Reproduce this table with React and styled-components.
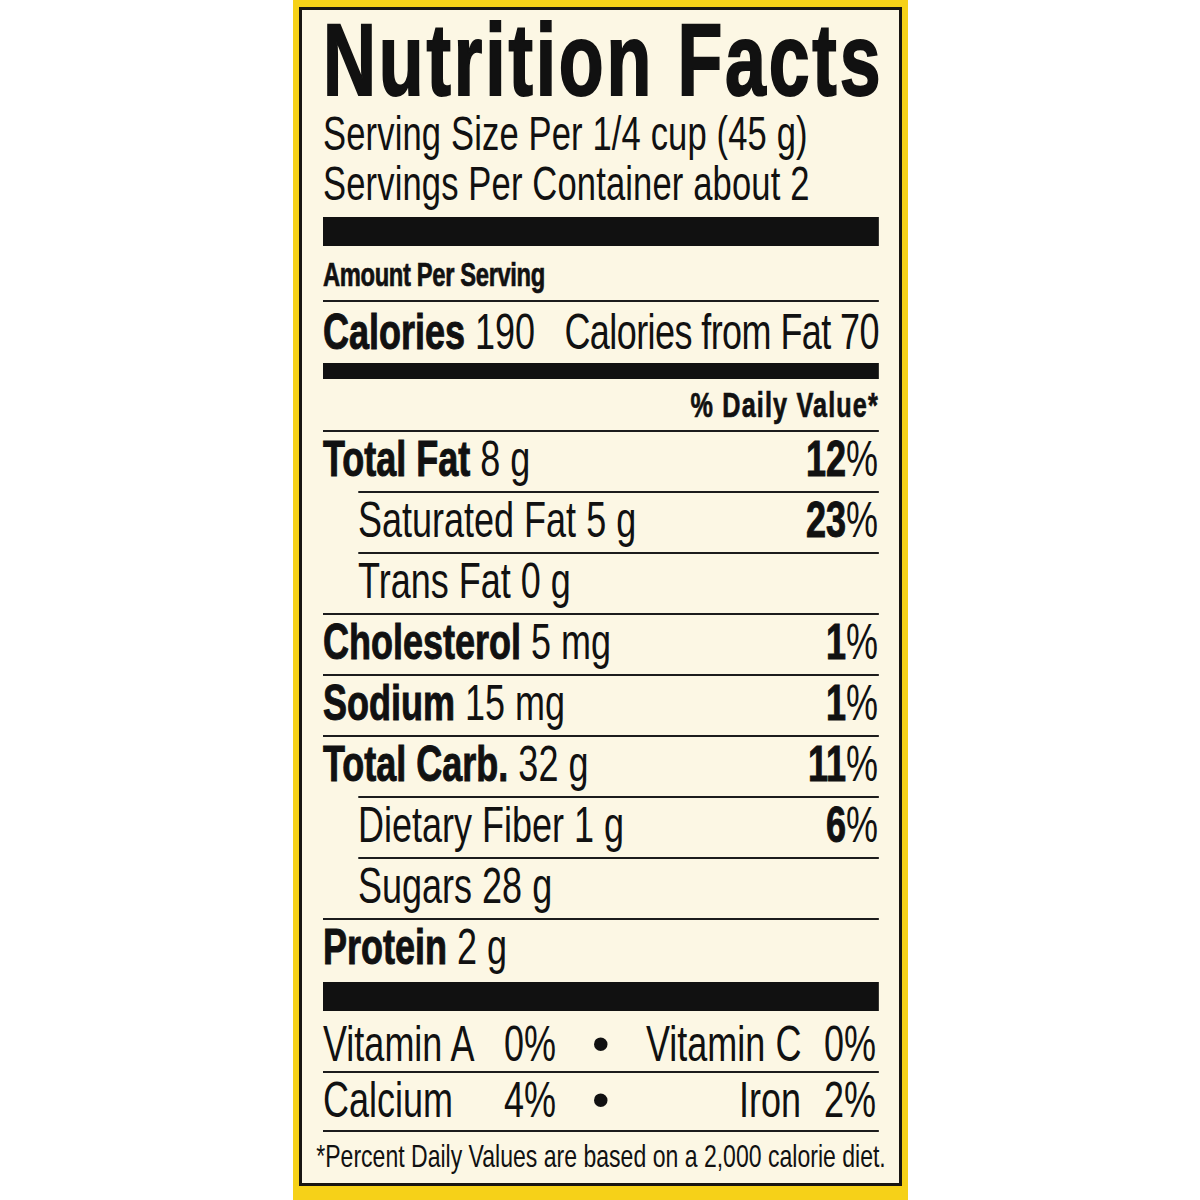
import React from 'react'
import styled, { createGlobalStyle } from 'styled-components'

// The label face is a condensed grotesque; Liberation Sans is squeezed
// horizontally by K to get the same proportions.
const K = 0.72
const u = (px) => `${(px / K).toFixed(2)}px`

const GlobalStyle = createGlobalStyle`
  html, body {
    margin: 0;
    padding: 0;
    background: #fff;
  }
  body {
    font-family: "Liberation Sans", Arial, Helvetica, sans-serif;
    color: #111;
  }
`

const Page = styled.div`
  width: 1200px;
  height: 1200px;
  display: flex;
  justify-content: center;
`

const Frame = styled.div`
  width: 615px;
  box-sizing: border-box;
  background: #f6d118;
  padding: 7px 6px 14px 6px;
`

const Label = styled.section`
  background: #fcf7e4;
  border: 3px solid #181512;
  padding: 8px 19px 0 21px;
  overflow: hidden;
`

const Sheet = styled.div`
  width: ${u(556)};
  transform: scaleX(${K});
  transform-origin: 0 0;
  display: flex;
  flex-direction: column;
  white-space: nowrap;
`

const Title = styled.h1`
  margin: 0;
  font-size: 102px;
  line-height: 84px;
  font-weight: 700;
  letter-spacing: 3.9px;
  -webkit-text-stroke: 2px currentColor;
`

const Serving = styled.p`
  margin: 0;
  font-size: 48px;
  line-height: 50px;
  letter-spacing: 0.2px;
  &:first-of-type {
    margin-top: 7px;
  }
`

const Bar = styled.div`
  height: ${({ $h }) => $h}px;
  margin-top: ${({ $gap }) => $gap || 0}px;
  background: #111;
`

const Heading = styled.div`
  font-weight: 700;
  font-size: ${({ $right }) => ($right ? 35 : 33)}px;
  line-height: 51px;
  padding-top: ${({ $right }) => ($right ? 0 : 3)}px;
  letter-spacing: ${({ $right }) => ($right ? '1.6px' : '-0.5px')};
  text-align: ${({ $right }) => ($right ? 'right' : 'left')};
  -webkit-text-stroke: 0.7px currentColor;
`

const Row = styled.div`
  display: flex;
  justify-content: space-between;
  align-items: baseline;
  border-top: 2px solid #1c1c1c;
  margin-left: ${({ $indent }) => ($indent ? u(35) : 0)};
  height: ${({ $h }) => $h || 59}px;
  font-size: 50px;
  line-height: ${({ $lh }) => $lh || 55}px;
  b {
    font-weight: 700;
    -webkit-text-stroke: 1px currentColor;
  }
`

const Tight = styled.span`
  letter-spacing: -0.8px;
`

const Pct = styled.span`
  padding-right: ${u(1)};
`

const VitRow = styled.div`
  display: grid;
  grid-template-columns: ${u(169)} ${u(64)} ${u(90)} ${u(155)} ${u(78)};
  align-items: baseline;
  border-top: ${({ $top }) => ($top ? '2px solid #1c1c1c' : 'none')};
  border-bottom: ${({ $top }) => ($top ? '2px solid #1c1c1c' : 'none')};
  padding-top: ${({ $top }) => ($top ? 0 : 6)}px;
  padding-bottom: ${({ $top }) => ($top ? 2 : 0)}px;
  font-size: 50px;
  line-height: ${({ $top }) => ($top ? 55 : 54)}px;
`

const Cell = styled.span`
  text-align: ${({ $align }) => $align || 'left'};
  padding-right: ${({ $end }) => ($end ? u(3) : 0)};
`

const Dot = styled.span`
  text-align: center;
  span {
    display: inline-block;
    transform: scaleX(${1 / K});
  }
`

const Footnote = styled.p`
  margin: 0 ${u(-8)};
  font-size: 32px;
  line-height: 48px;
  padding-bottom: 3px;
  text-align: center;
`

const nutrients = [
  { name: 'Total Fat', amount: '8 g', pct: '12' },
  { name: 'Saturated Fat', amount: '5 g', pct: '23', sub: true },
  { name: 'Trans Fat', amount: '0 g', sub: true },
  { name: 'Cholesterol', amount: '5 mg', pct: '1' },
  { name: 'Sodium', amount: '15 mg', pct: '1' },
  { name: 'Total Carb.', amount: '32 g', pct: '11' },
  { name: 'Dietary Fiber', amount: '1 g', pct: '6', sub: true },
  { name: 'Sugars', amount: '28 g', sub: true },
  { name: 'Protein', amount: '2 g' },
]

const vitamins = [
  ['Vitamin A', '0%', 'Vitamin C', '0%'],
  ['Calcium', '4%', 'Iron', '2%'],
]

export default function App() {
  return (
    <Page>
      <GlobalStyle />
      <Frame>
        <Label>
          <Sheet>
            <Title>Nutrition Facts</Title>
            <Serving>Serving Size Per 1/4 cup (45 g)</Serving>
            <Serving>Servings Per Container about 2</Serving>
            <Bar $h={29} $gap={8} />
            <Heading>Amount Per Serving</Heading>
            <Row $h={61} $lh={61}>
              <span>
                <b>Calories</b> 190
              </span>
              <Tight>Calories from Fat 70</Tight>
            </Row>
            <Bar $h={16} />
            <Heading $right>% Daily Value*</Heading>
            {nutrients.map((n) => (
              <Row key={n.name} $indent={n.sub}>
                <span>
                  {n.sub ? n.name : <b>{n.name}</b>} {n.amount}
                </span>
                {n.pct && (
                  <Pct>
                    <b>{n.pct}</b>%
                  </Pct>
                )}
              </Row>
            ))}
            <Bar $h={29} $gap={3} />
            {vitamins.map(([a, pa, b, pb], i) => (
              <VitRow key={a} $top={i > 0}>
                <Cell>{a}</Cell>
                <Cell $align="right">{pa}</Cell>
                <Dot>
                  <span>•</span>
                </Dot>
                <Cell $align="right">{b}</Cell>
                <Cell $align="right" $end>
                  {pb}
                </Cell>
              </VitRow>
            ))}
            <Footnote>*Percent Daily Values are based on a 2,000 calorie diet.</Footnote>
          </Sheet>
        </Label>
      </Frame>
    </Page>
  )
}
